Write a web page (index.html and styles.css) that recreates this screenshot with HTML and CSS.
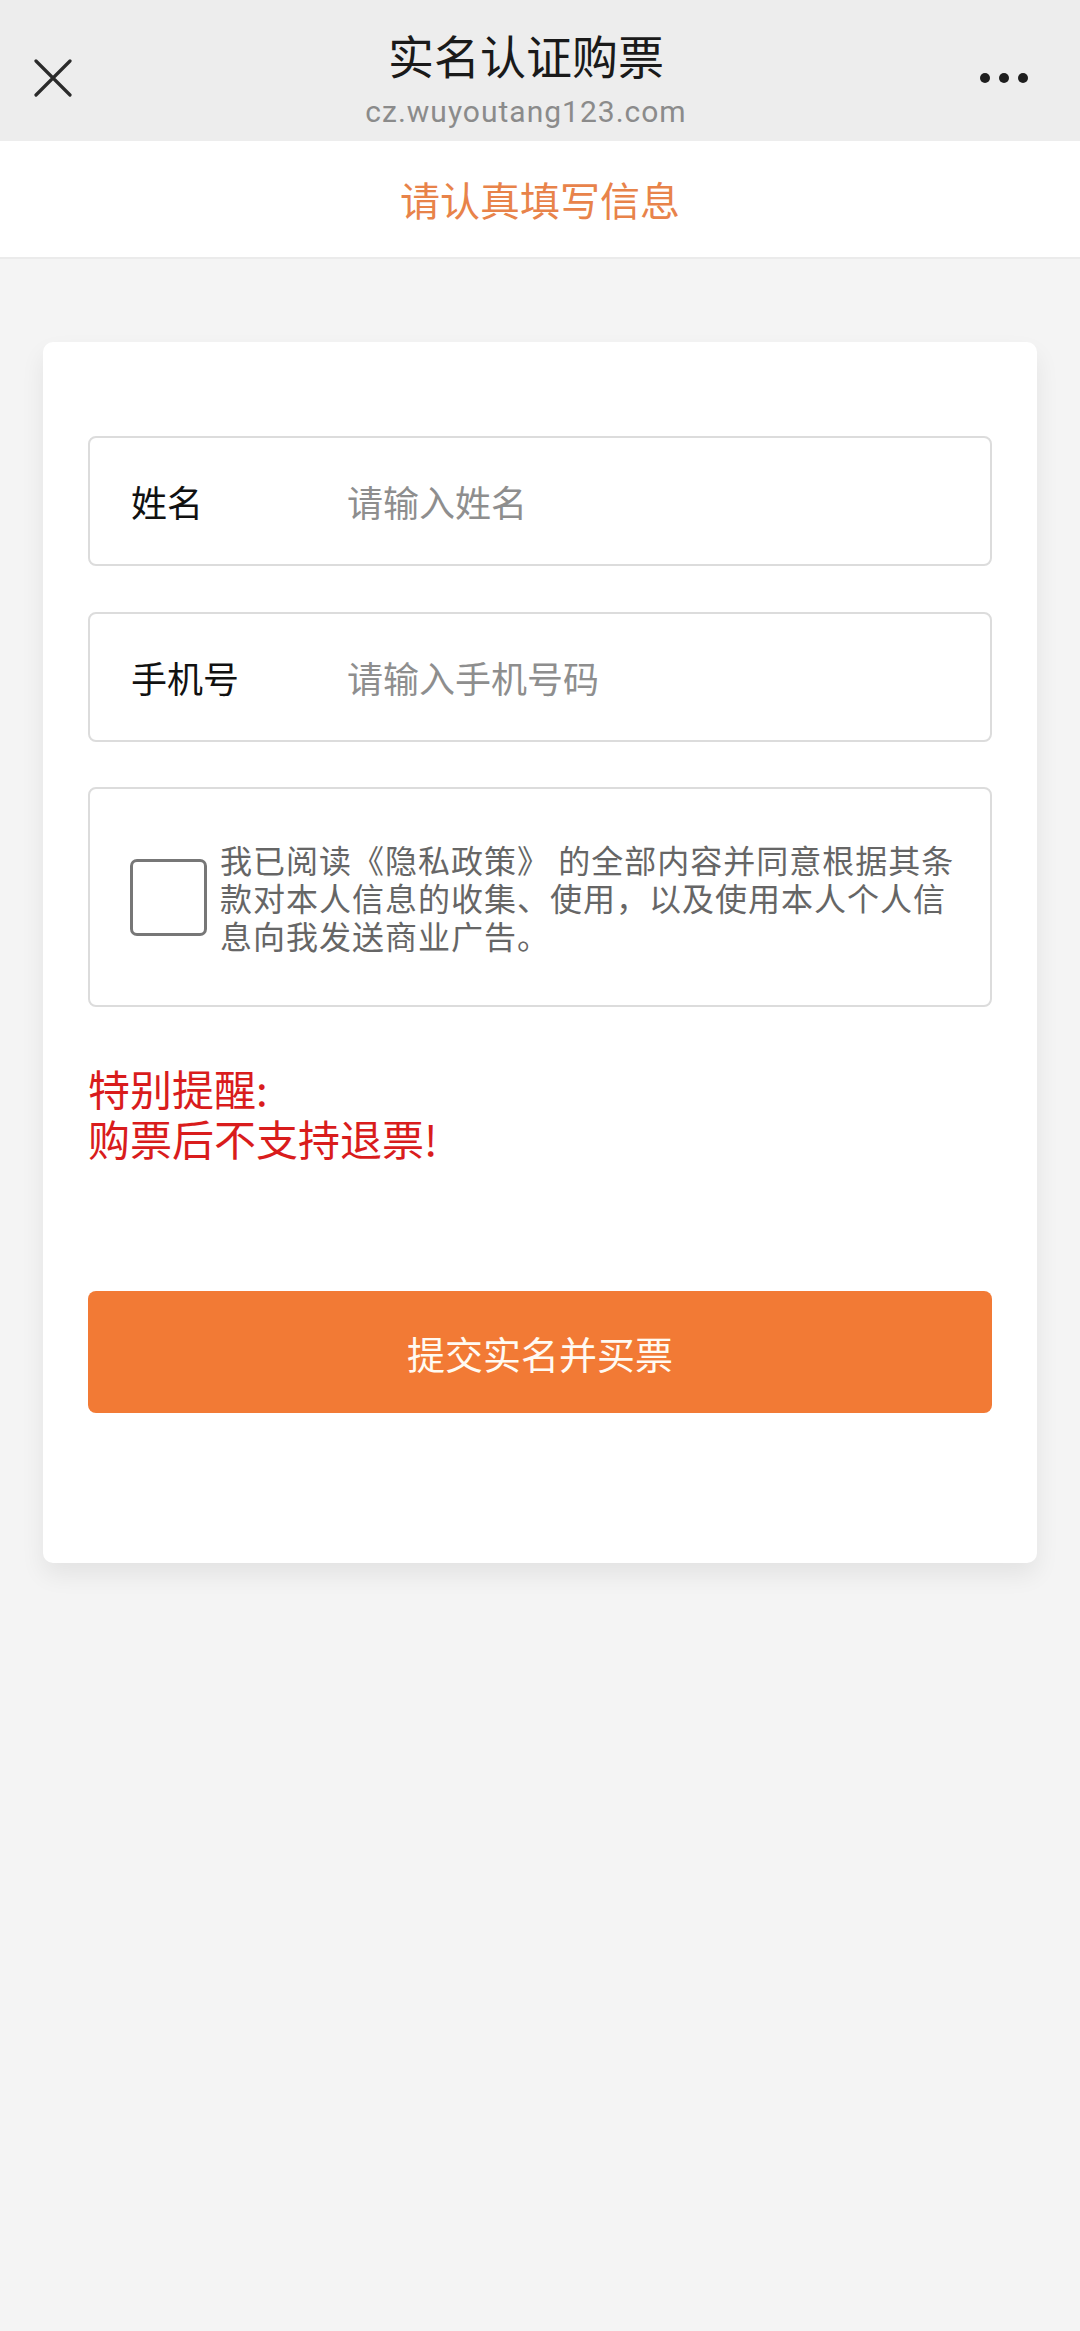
FILE: index.html
```html
<!DOCTYPE html>
<html lang="zh-CN">
<head>
    <meta charset="UTF-8">
    <meta name="viewport" content="width=device-width, initial-scale=1.0">
    <title>实名认证购票</title>
    <link rel="stylesheet" href="styles.css">
</head>
<body>

    <header class="topbar">
        <span class="close">
            <svg width="38" height="38" viewBox="0 0 38 38">
                <path d="M2 2 L36 36 M36 2 L2 36" stroke="#2b2b2b" stroke-width="3.2" stroke-linecap="round" fill="none"/>
            </svg>
        </span>
        <div class="title-wrap">
            <div class="title">实名认证购票</div>
            <div class="url">cz.wuyoutang123.com</div>
        </div>
        <span class="more"><i></i><i></i><i></i></span>
    </header>

    <div class="subhead">请认真填写信息</div>

    <main>
        <div class="card">
            <div class="field">
                <label for="username">姓名</label>
                <input type="text" id="username" placeholder="请输入姓名">
            </div>

            <div class="field">
                <label for="phone">手机号</label>
                <input type="tel" id="phone" placeholder="请输入手机号码">
            </div>

            <div class="consent">
                <span class="checkbox"></span>
                <p>我已阅读《隐私政策》 的全部内容并同意根据其条款对本人信息的收集、使用，以及使用本人个人信息向我发送商业广告。</p>
            </div>

            <div class="notice">
                <div>特别提醒:</div>
                <div>购票后不支持退票!</div>
            </div>

            <button class="submit">提交实名并买票</button>
        </div>
    </main>

</body>
</html>
```

FILE: styles.css
```css
body {
    margin: 0;
    padding: 0;
    background-color: #f4f4f4;
    font-family: "Noto Sans CJK SC", "Noto Sans", sans-serif;
    color: #111;
}

.topbar {
    height: 141px;
    background-color: #ededed;
    display: flex;
    align-items: center;
    justify-content: space-between;
    padding: 0 52px 0 34px;
    box-sizing: border-box;
}

.close {
    width: 38px;
    height: 38px;
    display: flex;
    margin-top: 14px;
}

.title-wrap {
    text-align: center;
    margin-top: 14px;
}

.title {
    font-size: 46px;
    line-height: 60px;
    color: #1a1a1a;
}

.url {
    font-family: Roboto, "Noto Sans", sans-serif;
    font-size: 30px;
    line-height: 40px;
    margin-top: 8px;
    letter-spacing: 1px;
    color: #8b8b8b;
}

.more {
    display: flex;
    gap: 9px;
    margin-top: 14px;
}

.more i {
    width: 10px;
    height: 10px;
    border-radius: 50%;
    background-color: #1e1e1e;
}

.subhead {
    height: 116px;
    background-color: #fff;
    border-bottom: 2px solid #ebebeb;
    color: #e8834a;
    font-size: 40px;
    line-height: 116px;
    text-align: center;
}

main {
    padding: 83px 43px 40px;
}

.card {
    background-color: #fff;
    border-radius: 10px;
    padding: 94px 45px 150px;
    box-shadow: 0 12px 24px rgba(0, 0, 0, 0.07);
}

.field {
    height: 130px;
    border: 2px solid #dcdcdc;
    border-radius: 8px;
    box-sizing: border-box;
    display: flex;
    align-items: center;
    padding-left: 41px;
    margin-bottom: 46px;
}

.field label {
    width: 216px;
    flex-shrink: 0;
    font-size: 36px;
    color: #111;
}

.field input {
    flex: 1;
    border: none;
    outline: none;
    background: transparent;
    font-family: inherit;
    font-size: 36px;
    color: #333;
    padding: 0;
}

.field input::placeholder {
    color: #8e8e8e;
}

.consent {
    height: 220px;
    margin-top: -1px;
    border: 2px solid #dcdcdc;
    border-radius: 8px;
    box-sizing: border-box;
    display: flex;
    align-items: center;
    padding: 0 30px 0 40px;
}

.checkbox {
    width: 77px;
    height: 77px;
    flex-shrink: 0;
    border: 3px solid #777;
    border-radius: 7px;
    box-sizing: border-box;
    margin-right: 13px;
}

.consent p {
    margin: 0;
    font-size: 32px;
    line-height: 38px;
    letter-spacing: 1px;
    color: #666;
}

.notice {
    margin-top: 56px;
    font-size: 42px;
    line-height: 50px;
    color: #d91c1c;
}

.submit {
    display: block;
    width: 100%;
    height: 122px;
    margin-top: 128px;
    border: none;
    border-radius: 8px;
    background-color: #f27a35;
    color: #fffaf2;
    font-family: inherit;
    font-size: 38px;
    cursor: pointer;
}
```
